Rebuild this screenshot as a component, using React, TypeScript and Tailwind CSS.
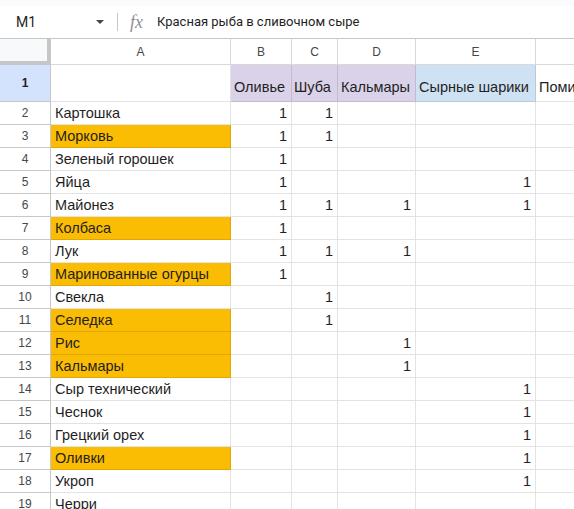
import React from "react";

const cols = ["A", "B", "C", "D", "E", ""];
const gridCols = "grid grid-cols-[51px_180px_61px_46px_78px_120px_80px]";

type Row = { name: string; fill?: boolean; v: (string | null)[] };

const rows: Row[] = [
  { name: "Картошка", v: ["1", "1", null, null] },
  { name: "Морковь", fill: true, v: ["1", "1", null, null] },
  { name: "Зеленый горошек", v: ["1", null, null, null] },
  { name: "Яйца", v: ["1", null, null, "1"] },
  { name: "Майонез", v: ["1", "1", "1", "1"] },
  { name: "Колбаса", fill: true, v: ["1", null, null, null] },
  { name: "Лук", v: ["1", "1", "1", null] },
  { name: "Маринованные огурцы", fill: true, v: ["1", null, null, null] },
  { name: "Свекла", v: [null, "1", null, null] },
  { name: "Селедка", fill: true, v: [null, "1", null, null] },
  { name: "Рис", fill: true, v: [null, null, "1", null] },
  { name: "Кальмары", fill: true, v: [null, null, "1", null] },
  { name: "Сыр технический", v: [null, null, null, "1"] },
  { name: "Чеснок", v: [null, null, null, "1"] },
  { name: "Грецкий орех", v: [null, null, null, "1"] },
  { name: "Оливки", fill: true, v: [null, null, null, "1"] },
  { name: "Укроп", v: [null, null, null, "1"] },
  { name: "Черри", v: [null, null, null, null] },
];

const cell = "border-r border-b border-black/[0.11] h-[23px] text-[14.5px] leading-[23px] whitespace-nowrap";
const head = "border-r border-b border-black/[0.11] text-[14.5px] flex items-end pb-[2px] whitespace-nowrap";

export default function App() {
  return (
    <div className="w-[574px] h-[509px] overflow-hidden bg-white text-[#1f1f1f]" style={{ fontFamily: "'Liberation Sans', Arial, sans-serif" }}>
      {/* top strip */}
      <div className="h-[6px] bg-[#f9fbfd]" />

      {/* formula bar */}
      <div className="flex items-center h-[33px] border-b border-[#c7c7c7] bg-white" style={{ fontFamily: "Roboto, 'Liberation Sans', sans-serif" }}>
        <div className="w-[117px] flex items-center pl-[16px] pr-[13px]">
          <span className="text-[14px] flex-1">M1</span>
          <span className="w-0 h-0 border-l-[4px] border-r-[4px] border-t-[4px] border-l-transparent border-r-transparent border-t-[#444746]" />
        </div>
        <div className="w-px h-[18px] bg-[#c7c7c7]" />
        <span className="ml-[12px] w-[22px] text-[18px] leading-none italic text-[#8e9196]" style={{ fontFamily: "'Liberation Serif', serif" }}>fx</span>
        <span className="ml-[5px] text-[13px]">Красная рыба в сливочном сыре</span>
      </div>

      {/* column headers */}
      <div className={gridCols + " h-[26px]"}>
        <div className="bg-[#f8f9fa] border-r-4 border-b-4 border-[#c4c7c5]" />
        {cols.map((c, i) => (
          <div key={i} className="border-r border-b border-[#d9d9d9] flex items-center justify-center text-[12px] text-[#444746]">
            {c}
          </div>
        ))}
      </div>

      {/* row 1 */}
      <div className={gridCols + " h-[37px]"}>
        <div className="bg-[#d3e3fd] border-r border-b border-[#c7c7c7] flex items-center justify-center text-[12px] font-bold">1</div>
        <div className="border-r border-b border-black/[0.11]" />
        <div className={head + " bg-[#d9d2e9] px-[3px]"}>Оливье</div>
        <div className={head + " bg-[#d9d2e9] px-[2px]"}>Шуба</div>
        <div className={head + " bg-[#d9d2e9] px-[3px]"}>Кальмары</div>
        <div className={head + " bg-[#cfe2f3] px-[3px]"}>Сырные шарики</div>
        <div className={head + " px-[3px]"}>Помидоры</div>
      </div>

      {/* data rows */}
      {rows.map((r, i) => (
        <div key={i} className={gridCols}>
          <div className="border-r border-b border-[#c7c7c7] h-[23px] flex items-center justify-center text-[12px] text-[#444746]">{i + 2}</div>
          <div className={cell + " px-[4px] " + (r.fill ? "bg-[#fbbc04]" : "")}>{r.name}</div>
          {r.v.map((x, j) => (
            <div key={j} className={cell + " text-right px-[4px]"}>{x}</div>
          ))}
          <div className={cell} />
        </div>
      ))}
    </div>
  );
}
